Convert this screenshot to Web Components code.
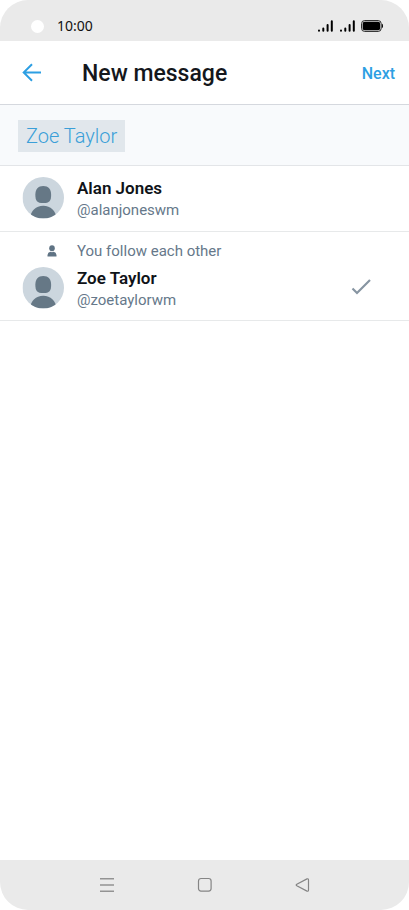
<!DOCTYPE html>
<html lang="en">
<head>
<meta charset="utf-8">
<meta name="viewport" content="width=device-width, initial-scale=1">
<title>New message</title>
<style>
  html, body { margin: 0; background: #fff; }
  body { font-family: Roboto, "Liberation Sans", sans-serif; color: #14171c; }
</style>
</head>
<body>
<message-screen>
  <status-bar slot="top">10:00</status-bar>
  <title-bar slot="top">New message<span slot="action">Next</span></title-bar>
  <recipient-field slot="top">Zoe Taylor</recipient-field>
  <person-row>Alan Jones<span slot="handle">@alanjoneswm</span></person-row>
  <person-row selected>Zoe Taylor<span slot="handle">@zoetaylorwm</span><span slot="note">You follow each other</span></person-row>
  <nav-bar slot="bottom"></nav-bar>
</message-screen>
<script>
function define(name, html) {
  const template = document.createElement('template');
  template.innerHTML = html;
  customElements.define(name, class extends HTMLElement {
    constructor() {
      super();
      this.attachShadow({ mode: 'open' }).append(template.content.cloneNode(true));
    }
  });
}
const reset = `*{box-sizing:border-box} svg{display:block}
  button{font:inherit;color:inherit;background:none;border:0;padding:0;margin:0;cursor:pointer;text-align:left}`;

define('message-screen', `<style>
  :host{display:flex;flex-direction:column;min-height:100vh;background:#fff;border-radius:28px;overflow:hidden}
  main{flex:1}
</style>
<slot name="top"></slot><main><slot></slot></main><slot name="bottom"></slot>`);

define('status-bar', `<style>${reset}
  :host{display:flex;align-items:center;height:41px;padding:11px 25px 0 31px;box-sizing:border-box;background:#eaeaea;color:#111;
    font:14px/20px "Noto Sans",sans-serif}
  .camera{width:13px;height:13px;border-radius:50%;background:#fff;margin-right:13px}
  .icons{display:flex;gap:6px;margin-left:auto;align-items:center}
</style>
<span class="camera"></span><time><slot></slot></time>
<span class="icons">
  <svg width="16" height="12" stroke="#000" stroke-width="2" stroke-linecap="round"><path d="M1 10.5v.2M5.300 8.500V10.800M9.600 5V10.800M13.800 1.200V10.800"/></svg>
  <svg width="15" height="12" stroke="#000" stroke-width="2" stroke-linecap="round"><path d="M1 10.500v.2M5.300 8.500V10.800M9.600 5V10.800M13.800 1.200V10.800"/></svg>
  <svg width="23" height="12" fill="none"><rect x=".6" y=".6" width="19.600" height="10.800" rx="3" stroke="#222" stroke-width="1"/><rect x="1.700" y="1.700" width="17.400" height="8.600" rx="2" fill="#000"/><path d="M21 3.800c1.300.4 1.300 4 0 4.400z" fill="#000"/></svg>
</span>`);

define('title-bar', `<style>${reset}
  :host{display:flex;align-items:center;height:64px;padding:0 14px 0 22px;box-sizing:border-box;border-bottom:1px solid #d5d8de}
  h1{flex:1;margin:0 0 0 40px;font-size:23px;line-height:28px;font-weight:500;padding-top:2px}
  .next{color:#2d9fe3;font-size:16px;line-height:24px;font-weight:500;padding-top:2px}
</style>
<button aria-label="Back"><svg width="20" height="20" fill="none" stroke="#2d9fe3" stroke-width="2"><path d="M19 9.500H2M10 1.200 1.700 9.500l8.300 8.300"/></svg></button>
<h1><slot></slot></h1><button class="next"><slot name="action"></slot></button>`);

define('recipient-field', `<style>${reset}
  :host{display:flex;align-items:center;height:61px;padding:1px 18px 0;box-sizing:border-box;background:#f8fafc;border-bottom:1px solid #e3e5e8}
  .chip{height:32px;padding:0 8px;background:#e1e7ec;color:#3a9fd8;font-size:20px;line-height:30px;font-weight:300;white-space:nowrap}
  input{flex:1;min-width:0;height:32px;border:0;outline:0;background:transparent;font:300 20px Roboto,sans-serif}
</style>
<button class="chip"><slot></slot></button><input type="text" aria-label="Add people">`);

define('person-row', `<style>${reset}
  :host{display:block;border-bottom:1px solid #e7e9ea}
  button{display:grid;grid-template-columns:41px 1fr auto;column-gap:14px;align-items:center;width:100%;padding:11px 38px 10px 22px}
  .badge{display:none;justify-self:end;margin-right:6px}
  .avatar{align-self:start}
  .note{display:none;font-size:15px;line-height:20px;color:#66788a}
  .check{display:none}
  :host([selected]) button{padding-top:9px;padding-bottom:9px}
  :host([selected]) .badge,:host([selected]) .note,:host([selected]) .check{display:block}
  :host([selected]) .note{grid-column:2 / 4}
  :host([selected]) .avatar,:host([selected]) .text{margin-top:6px}
  .check{margin-top:2px}
  .text{display:flex;flex-direction:column}
  .name,.handle{line-height:22px}
  .name{font-size:17px;font-weight:600;color:#0f1318}
  .handle{font-size:15px;color:#66788a}
</style>
<button>
  <svg class="badge" width="10" height="12" fill="#5f7384"><ellipse cx="5" cy="3.300" rx="2.800" ry="3"/><path d="M.5 11.500V10Q.8 7.200 3.400 6.800q1.600.9 3.200 0Q9.200 7.200 9.500 10v1.500z"/></svg>
  <span class="note"><slot name="note"></slot></span>
  <svg class="avatar" width="42" height="42" viewBox="-.5 0 41.500 41.500"><clipPath id="round"><circle cx="20.500" cy="20.500" r="20.500"/></clipPath><g clip-path="url(#round)"><path d="M0 0h41v41H0z" fill="#ccd6de"/><path d="M20.500 9c5 0 7.800 3 7.800 8.500 0 6-1.600 8.300-7.800 8.300s-7.800-2.300-7.800-8.300C12.700 12 15.500 9 20.500 9z" fill="#667886"/><path d="M7 41c1.500-7.500 6-12.500 13.500-12.500S32.500 33.500 34 41z" fill="#667886"/></g></svg>
  <span class="text"><span class="name"><slot></slot></span><span class="handle"><slot name="handle"></slot></span></span>
  <svg class="check" width="20" height="16" fill="none" stroke="#8795a2" stroke-width="2.200"><path d="m1.500 9.500 4.500 4.500L19 1"/></svg>
</button>`);

define('nav-bar', `<style>${reset}
  :host{display:flex;justify-content:center;align-items:center;gap:82px;height:50px;background:#eaeaea}
</style>
<button aria-label="Recent apps"><svg width="16" height="16" stroke="#939393" stroke-width="1.400"><path d="M1 1.700h14M1 8h14M1 14.300h14"/></svg></button>
<button aria-label="Home"><svg width="16" height="16" fill="none" stroke="#858585" stroke-width="1.200"><rect x="1.500" y="1.500" width="12.600" height="12.600" rx="2.500"/></svg></button>
<button aria-label="Back"><svg width="16" height="16" fill="none" stroke="#858585" stroke-width="1.200" stroke-linejoin="round"><path d="M12 1.900 1.800 7.300q-1.200.7 0 1.400l10.200 5.400q1.500.5 1.500-1V2.900q0-1.500-1.500-1z"/></svg></button>`);
</script>
</body>
</html>
